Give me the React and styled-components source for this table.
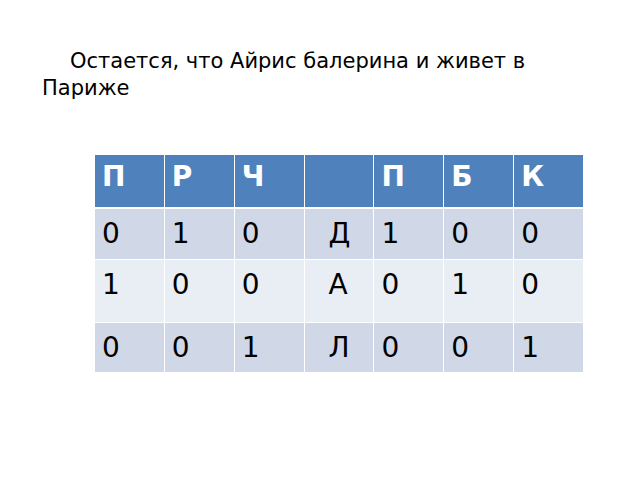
import React from "react";
import styled, { createGlobalStyle } from "styled-components";

const GlobalStyle = createGlobalStyle`
  html, body {
    margin: 0;
    padding: 0;
    background: #ffffff;
    font-family: "DejaVu Sans", sans-serif;
  }
`;

const headers = ["П", "Р", "Ч", "", "П", "Б", "К"];

const rows = [
  { height: 50, tone: "dark", cells: ["0", "1", "0", "Д", "1", "0", "0"] },
  { height: 62, tone: "light", cells: ["1", "0", "0", "А", "0", "1", "0"] },
  { height: 49, tone: "dark", cells: ["0", "0", "1", "Л", "0", "0", "1"] },
];

export default function App() {
  return (
    <Page>
      <GlobalStyle />
      <Caption>Остается, что Айрис балерина и живет в Париже</Caption>
      <Table>
        {headers.map((h, i) => (
          <HeadCell key={`h${i}`}>{h}</HeadCell>
        ))}
        {rows.map((row, r) =>
          row.cells.map((c, i) => (
            <Cell key={`${r}-${i}`} $tone={row.tone} $h={row.height} $indent={i === 3}>
              {c}
            </Cell>
          ))
        )}
      </Table>
    </Page>
  );
}

const Page = styled.div`
  width: 640px;
  height: 480px;
  padding: 48px 0 0 42px;
  box-sizing: border-box;
`;

const Caption = styled.p`
  margin: 0;
  width: 510px;
  font-size: 21px;
  line-height: 27px;
  text-indent: 28px;
  color: #000;
`;

const Table = styled.div`
  display: grid;
  grid-template-columns: repeat(7, 1fr);
  grid-template-rows: 53px auto auto auto;
  width: 488px;
  margin: 53px 0 0 53px;
  column-gap: 1px;
  row-gap: 1px;
  background: #ffffff;

  & > :nth-child(-n + 7) {
    margin-bottom: 1px;
  }
`;

const HeadCell = styled.div`
  background: #4f81bd;
  color: #ffffff;
  font-weight: bold;
  font-size: 28px;
  padding: 5px 0 0 7px;
  box-sizing: border-box;
`;

const Cell = styled.div`
  height: ${(p) => p.$h}px;
  background: ${(p) => (p.$tone === "dark" ? "#d0d8e8" : "#e9edf4")};
  color: #000;
  font-size: 28px;
  padding: 8px 0 0 ${(p) => (p.$indent ? 24 : 7)}px;
  box-sizing: border-box;
`;
